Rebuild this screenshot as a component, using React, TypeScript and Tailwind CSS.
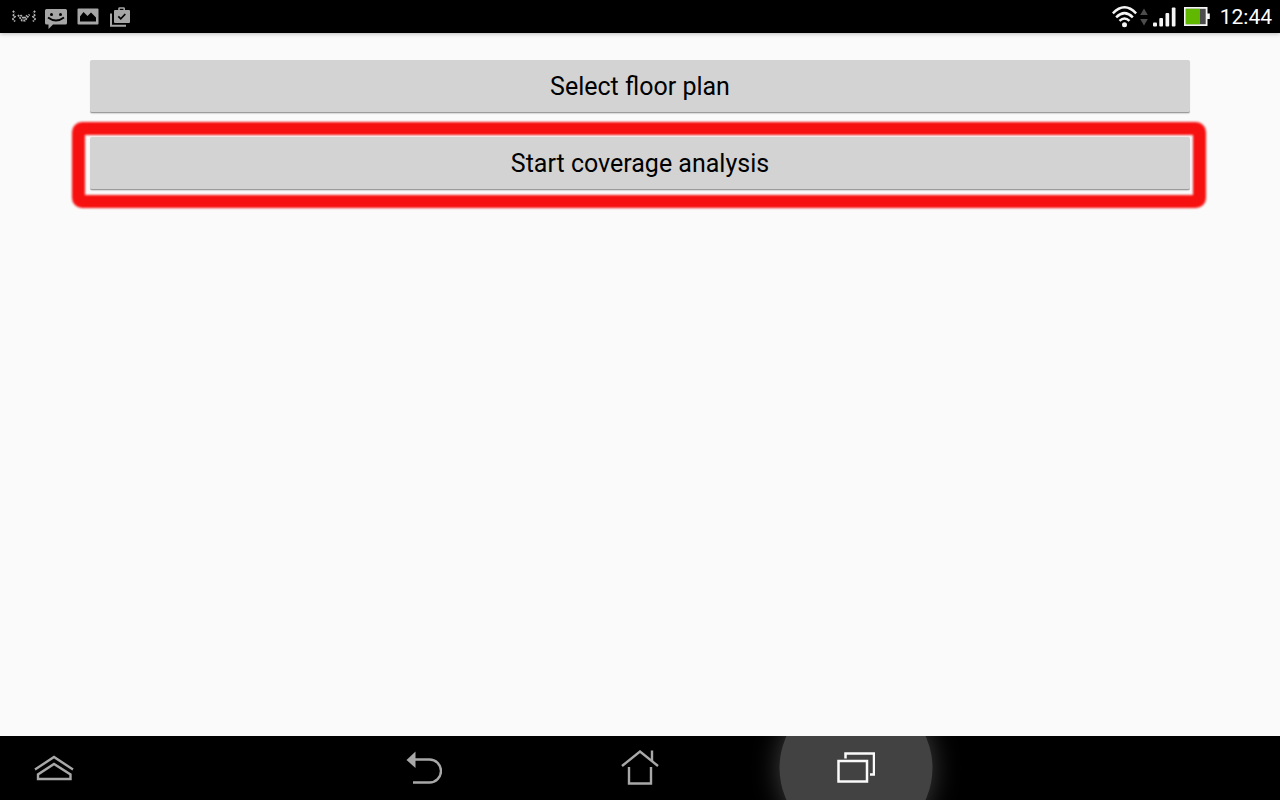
import type { ReactNode } from "react";

const IviIcon = () => (
  <svg width="24" height="13" viewBox="0 0 24 13" fill="none" stroke="#b4b4b4" strokeWidth="1.8" strokeDasharray="1.9 0.8">
    <path d="M0.8 1 L3 3" />
    <path d="M0.8 4.5 L3 6.5 L1 9 L3 11.5" />
    <path d="M6 5 L10 10.5 H13 L17.5 4.5" />
    <path d="M8.5 5 L11.8 8.5 L15 5.5" />
    <path d="M23.2 1 L21 3" />
    <path d="M23.2 4.5 L21 6.5 L23 9 L21 11.5" />
  </svg>
);

const MessageIcon = () => (
  <svg width="22" height="20" viewBox="0 0 22 20">
    <path d="M1.5 0 H20.5 Q22 0 22 1.5 V14 Q22 15.5 20.5 15.5 H8 L3.5 20 V15.5 H1.5 Q0 15.5 0 14 V1.5 Q0 0 1.5 0 Z" fill="#a6a6a6" />
    <circle cx="6.5" cy="5.5" r="1.5" />
    <circle cx="15.5" cy="5.5" r="1.5" />
    <path d="M3 8.5 Q11 14.5 19 8.5" fill="none" stroke="#000" strokeWidth="1.8" />
  </svg>
);

const PictureIcon = () => (
  <svg width="22" height="17" viewBox="0 0 22 17">
    <rect x="0.5" y="0.5" width="21" height="16" rx="1" fill="#a6a6a6" />
    <path d="M3 13.5 V8.5 L6.5 4 L10.5 8 L14 4.5 L19 9.5 V13.5 Z" fill="#000" />
  </svg>
);

const StoreIcon = () => (
  <svg width="21" height="20" viewBox="0 0 21 20">
    <path d="M2 6.5 V18.8 H17" fill="none" stroke="#a6a6a6" strokeWidth="2" />
    <path d="M10 4 V1.6 Q10 1 10.7 1 H14.5 Q15.2 1 15.2 1.6 V4" fill="none" stroke="#a6a6a6" strokeWidth="1.6" />
    <rect x="5" y="3" width="16" height="13" rx="1" fill="#a6a6a6" />
    <path d="M9.3 9.3 L11.8 11.8 L16.3 7" fill="none" stroke="#000" strokeWidth="1.7" />
  </svg>
);

const WifiIcon = () => (
  <svg width="25" height="22" viewBox="0 0 24 21" fill="none" stroke="#f5f5f5" strokeWidth="2.4">
    <path d="M0.8 7 Q12 -4.5 23.2 7" />
    <path d="M4 10.8 Q12 2.8 20 10.8" />
    <path d="M7.2 14.2 Q12 9.6 16.8 14.2" />
    <circle cx="12" cy="18" r="2.4" fill="#f5f5f5" stroke="none" />
  </svg>
);

const TrafficIcon = () => (
  <svg width="8" height="18" viewBox="0 0 8 18" fill="#4d4d4d">
    <path d="M4 0.5 L7.8 7 H0.2 Z" />
    <path d="M0.2 11 H7.8 L4 17.5 Z" />
  </svg>
);

const SignalIcon = () => (
  <svg width="23" height="20" viewBox="0 0 23 20" fill="#f5f5f5">
    <rect x="0" y="15.5" width="4" height="4" rx="1" />
    <rect x="6.3" y="11" width="3.7" height="8.5" rx="1" />
    <rect x="12.5" y="6" width="3.7" height="13.5" rx="1" />
    <rect x="18.8" y="0.5" width="3.7" height="19" rx="1" />
  </svg>
);

const BatteryIcon = () => (
  <svg width="26" height="19" viewBox="0 0 26 19">
    <rect x="0.9" y="0.9" width="21.7" height="17.2" fill="#4d4d4d" stroke="#f5f5f5" strokeWidth="1.8" />
    <rect x="1.8" y="1.8" width="14.2" height="15.4" fill="#61b800" />
    <rect x="23" y="6.5" width="2.8" height="5.5" fill="#f5f5f5" />
  </svg>
);

const ExpandIcon = () => (
  <svg width="40" height="26" viewBox="0 0 40 26" fill="none" stroke="#a8a8a8" strokeWidth="2.4">
    <path d="M1 14.5 L20 2 L39 14.5" />
    <path d="M4 24 V19.5 L20 9 L36.5 19.5 V24 Z" />
  </svg>
);

const BackIcon = () => (
  <svg width="36" height="34" viewBox="0 0 36 34" fill="none" stroke="#a8a8a8" strokeWidth="2.4">
    <path d="M8 8.5 H23.5 A11.5 11.5 0 0 1 23.5 31.5 H7" />
    <path d="M0.5 9 L9.5 0.5 V17 Z" fill="#a8a8a8" stroke="none" />
  </svg>
);

const HomeIcon = () => (
  <svg width="38" height="36" viewBox="0 0 38 36" fill="none" stroke="#a8a8a8" strokeWidth="2.4">
    <path d="M1 16 L19 1.5 L37 16" />
    <path d="M31 0.5 V11" />
    <path d="M8 17 V33.5 H30 V17" />
  </svg>
);

const RecentsIcon = () => (
  <svg width="38" height="32" viewBox="0 0 38 32" fill="none" stroke="#fafafa" strokeWidth="2.5">
    <rect x="1.5" y="9" width="28.5" height="20.5" />
    <path d="M8.5 6.5 V1.5 H37 V22.5 H33" />
  </svg>
);

const WideButton = ({ children }: { children: ReactNode }) => (
  <button
    type="button"
    className="h-[53px] w-full rounded-xs border-b border-[#9c9c9c] bg-[#d3d3d3] pt-0.5 text-center text-[25px] leading-8 text-black shadow-[0_1px_1px_#d8d8d8]"
  >
    {children}
  </button>
);

const App = () => {
  return (
    <div className="flex min-h-screen flex-col bg-[#fafafa] font-['Roboto',sans-serif]">
      <header className="flex h-[33px] items-center justify-between bg-black pr-2 pl-3 text-white shadow-[0_1px_4px_#bdbdbd]">
        <div className="flex items-center gap-[10px]">
          <IviIcon />
          <div className="-ml-px pt-1">
            <MessageIcon />
          </div>
          <PictureIcon />
          <StoreIcon />
        </div>
        <div className="flex items-center">
          <WifiIcon />
          <div className="flex items-center gap-[5px] pl-[3px]">
            <TrafficIcon />
            <SignalIcon />
          </div>
          <div className="pr-[10px] pl-2">
            <BatteryIcon />
          </div>
          <time className="text-[21px] leading-8">12:44</time>
        </div>
      </header>

      <main className="flex flex-1 flex-col gap-6 px-[90px] pt-[27px]">
        <WideButton>Select floor plan</WideButton>
        <div className="relative">
          <WideButton>Start coverage analysis</WideButton>
          <div className="pointer-events-none absolute -top-[15px] -right-4 -bottom-[18px] -left-[18px] rounded-[10px] border-13 border-[#f71010] blur-[1px]" />
        </div>
      </main>

      <nav className="grid h-16 grid-cols-[1fr_auto_1fr] overflow-hidden bg-black">
        <button type="button" aria-label="Expand" className="flex items-center justify-self-start px-[34px]">
          <ExpandIcon />
        </button>
        <div className="flex">
          <button type="button" aria-label="Back" className="flex w-[216px] items-center justify-center">
            <BackIcon />
          </button>
          <button type="button" aria-label="Home" className="flex w-[216px] items-center justify-center">
            <HomeIcon />
          </button>
          <button type="button" aria-label="Recent apps" className="relative flex w-[216px] items-center justify-center">
            <span className="absolute top-1/2 left-1/2 size-[153px] -translate-1/2 rounded-full bg-[#424242] shadow-[0_0_28px_#424242]" />
            <span className="relative">
              <RecentsIcon />
            </span>
          </button>
        </div>
      </nav>
    </div>
  );
};

export default App;
